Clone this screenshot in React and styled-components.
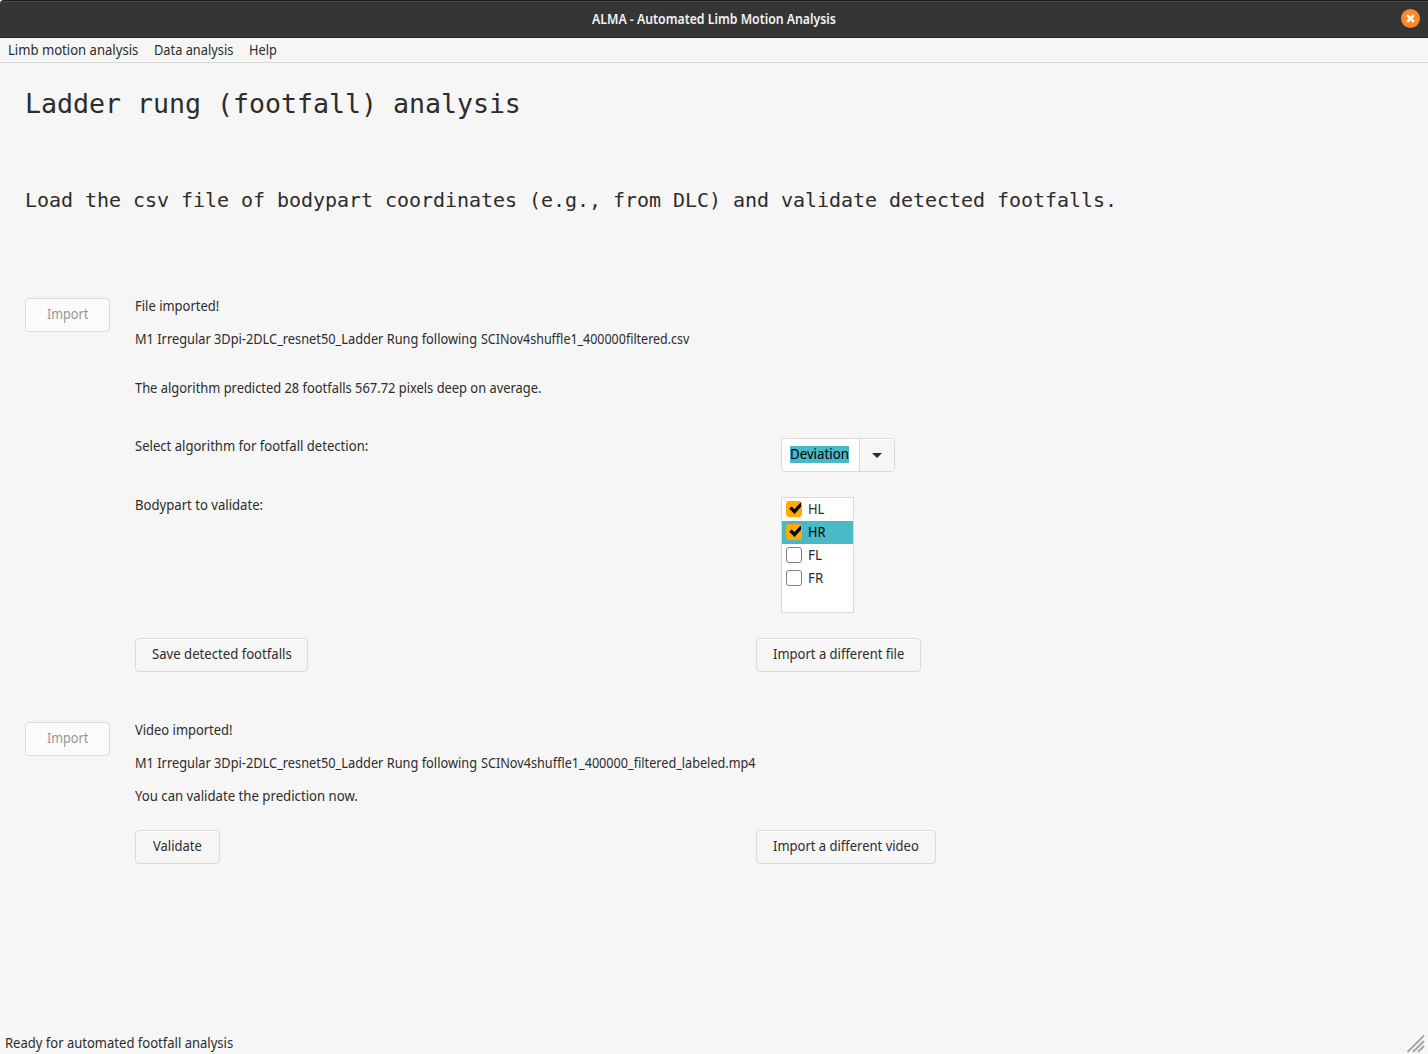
import React, { useLayoutEffect, useRef, useState } from "react";
import styled, { createGlobalStyle, css } from "styled-components";

const GlobalStyle = createGlobalStyle`
  * { box-sizing: border-box; }
  body {
    margin: 0;
    background: #f6f6f6;
    color: #2c2c2c;
    font: 14.6px/17px "Noto Sans", "Open Sans", sans-serif;
    overflow: hidden;
  }
`;

const Window = styled.div`
  display: flex;
  flex-direction: column;
  width: 1428px;
  height: 1054px;
  background: #f6f6f6;
`;

const TitleBar = styled.header`
  display: grid;
  grid-template-columns: 40px 1fr 40px;
  align-items: center;
  height: 38px;
  flex: none;
  background: #353535;
  border-top: 1px solid #1e1e1e;
  border-bottom: 1px solid #222222;
  border-radius: 4px 0 0 0;
  box-shadow: inset 0 1px 0 #484848;
`;

const WindowTitle = styled.div`
  grid-column: 2;
  display: flex;
  justify-content: center;
  color: #f2f2f2;
  font-weight: 600;
`;

const CloseButton = styled.button`
  display: flex;
  justify-content: center;
  align-items: center;
  justify-self: center;
  width: 19px;
  height: 19px;
  margin: 0 0 1px 5px;
  padding: 0;
  border: 0;
  border-radius: 50%;
  background: #f68b29;
`;

const MenuBar = styled.nav`
  display: flex;
  gap: 16px;
  height: 25px;
  flex: none;
  padding: 4px 8px 0;
  border-bottom: 1px solid #dadada;
`;

const Page = styled.main`
  flex: 1;
  padding: 25px 25px 0;
`;

const Heading = styled.h1`
  margin: 0;
  height: 96px;
  font: 26.6px/32px "DejaVu Sans Mono", monospace;
  letter-spacing: -0.015px;
  white-space: pre;
`;

const Intro = styled.p`
  margin: 0;
  height: 114px;
  font: 20px/32px "DejaVu Sans Mono", monospace;
  letter-spacing: -0.04px;
  white-space: pre;
`;

const Form = styled.div`
  display: grid;
  grid-template-columns: 110px 621px 1fr;
  grid-template-rows: 33px 49px 58px 59px 141px 84px 33px 33px 42px 34px;
  align-items: start;
  justify-items: start;
`;

const Cell = styled.div`
  display: flex;
  grid-column: ${(p) => p.$col};
  grid-row: ${(p) => p.$row};
  margin-left: ${(p) => p.$indent || 0}px;
`;

const Button = styled.button`
  display: flex;
  justify-content: center;
  align-items: flex-start;
  width: ${(p) => p.$width}px;
  height: 34px;
  padding: 7px 0 0;
  border: 1px solid #dadada;
  border-radius: 4px;
  background: #f6f6f6;
  box-shadow: inset 0 1px 0 #ffffff;
  color: #2c2c2c;
  font: inherit;
  ${(p) =>
    p.disabled &&
    css`
      background: #fbfbfb;
      color: #959595;
      box-shadow: none;
    `}
`;

const Combo = styled.div`
  display: flex;
  width: 114px;
  height: 34px;
  border: 1px solid #dadada;
  border-radius: 4px;
  background: #ffffff;
  overflow: hidden;
`;

const ComboValue = styled.div`
  width: 77px;
  padding: 7px 0 0 8px;
`;

const Selection = styled.div`
  width: 59px;
  height: 17px;
  background: #49b9c7;
  color: #000000;
`;

const ComboToggle = styled.div`
  flex: 1;
  display: flex;
  justify-content: center;
  align-items: center;
  border-left: 1px solid #dadada;
  background: #f6f6f6;
  box-shadow: inset 0 1px 0 #ffffff;
`;

const CheckList = styled.div`
  width: 73px;
  height: 116px;
  border: 1px solid #dadada;
  background: #ffffff;
`;

const CheckItem = styled.div`
  display: flex;
  align-items: flex-start;
  gap: 6px;
  height: 23px;
  padding: 3px 4px;
  background: ${(p) => (p.$selected ? "#49b9c7" : "transparent")};
  color: ${(p) => (p.$selected ? "#000000" : "#2c2c2c")};
`;

const CheckBox = styled.span`
  display: flex;
  flex: none;
  width: 16px;
  height: 16px;
  border: ${(p) => (p.$checked ? "0" : "1px solid #808080")};
  border-radius: 3px;
  background: ${(p) => (p.$checked ? "#ffab00" : "#ffffff")};
`;

const StatusBar = styled.footer`
  display: flex;
  justify-content: space-between;
  align-items: flex-start;
  height: 19px;
  flex: none;
  padding: 0 3px 0 5px;
`;

const LabelBox = styled.span`
  display: block;
  flex: none;
  width: ${(p) => p.$width}px;
  height: 17px;
  white-space: pre;
`;

const LabelText = styled.span`
  display: block;
  width: max-content;
  line-height: 15px;
  transform-origin: 0 50%;
`;

/* Condenses its text horizontally so that it fills the given width. */
function Label({ width, children }) {
  const ref = useRef(null);
  const [scale, setScale] = useState(1);
  useLayoutEffect(() => {
    setScale(width / ref.current.offsetWidth);
  }, [width, children]);
  return (
    <LabelBox $width={width}>
      <LabelText ref={ref} style={{ transform: `scaleX(${scale})` }}>
        {children}
      </LabelText>
    </LabelBox>
  );
}

const bodyparts = [
  { name: "HL", width: 16, checked: true },
  { name: "HR", width: 17.5, checked: true, selected: true },
  { name: "FL", width: 14 },
  { name: "FR", width: 15.5 },
];

export default function App() {
  return (
    <Window>
      <GlobalStyle />
      <TitleBar>
        <WindowTitle>
          <Label width={243.5}>ALMA - Automated Limb Motion Analysis</Label>
        </WindowTitle>
        <CloseButton aria-label="Close">
          <svg width="9" height="9" viewBox="0 0 9 9">
            <path d="M1.1 1.1 7.9 7.9M7.9 1.1 1.1 7.9" stroke="#fff" strokeWidth="2.4" />
          </svg>
        </CloseButton>
      </TitleBar>
      <MenuBar>
        <Label width={130}>Limb motion analysis</Label>
        <Label width={79}>Data analysis</Label>
        <Label width={28}>Help</Label>
      </MenuBar>
      <Page>
        <Heading>Ladder rung (footfall) analysis</Heading>
        <Intro>Load the csv file of bodypart coordinates (e.g., from DLC) and validate detected footfalls.</Intro>
        <Form>
          <Cell $col={1} $row={1}>
            <Button disabled $width={85}><Label width={41.5}>Import</Label></Button>
          </Cell>
          <Cell $col={2} $row={1}><Label width={84.5}>File imported!</Label></Cell>
          <Cell $col={2} $row={2}>
            <Label width={345.5}>{"M1 Irregular 3Dpi-2DLC_resnet50_Ladder Rung following "}</Label>
            <Label width={208.5}>SCINov4shuffle1_400000filtered.csv</Label>
          </Cell>
          <Cell $col={2} $row={3}>
            <Label width={406}>The algorithm predicted 28 footfalls 567.72 pixels deep on average.</Label>
          </Cell>
          <Cell $col={2} $row={4}><Label width={233}>Select algorithm for footfall detection:</Label></Cell>
          <Cell $col={3} $row={4} $indent={25}>
            <Combo>
              <ComboValue>
                <Selection><Label width={59}>Deviation</Label></Selection>
              </ComboValue>
              <ComboToggle>
                <svg width="10" height="5" viewBox="0 0 10 5">
                  <path d="M0 0H10L5 5Z" fill="#2c2c2c" />
                </svg>
              </ComboToggle>
            </Combo>
          </Cell>
          <Cell $col={2} $row={5}><Label width={128.5}>Bodypart to validate:</Label></Cell>
          <Cell $col={3} $row={5} $indent={25}>
            <CheckList>
              {bodyparts.map((b) => (
                <CheckItem key={b.name} $selected={b.selected}>
                  <CheckBox $checked={b.checked}>
                    {b.checked && (
                      <svg width="16" height="16" viewBox="0 0 16 16">
                        <path d="M3.2 7.7 5.6 5.4 8.5 8 14 2.2 15 1.8V5.8L8.6 12.9Z" fill="#000" />
                      </svg>
                    )}
                  </CheckBox>
                  <Label width={b.width}>{b.name}</Label>
                </CheckItem>
              ))}
            </CheckList>
          </Cell>
          <Cell $col={2} $row={6}>
            <Button $width={173}><Label width={139.5}>Save detected footfalls</Label></Button>
          </Cell>
          <Cell $col={3} $row={6}>
            <Button $width={165}><Label width={131}>Import a different file</Label></Button>
          </Cell>
          <Cell $col={1} $row={7}>
            <Button disabled $width={85}><Label width={41.5}>Import</Label></Button>
          </Cell>
          <Cell $col={2} $row={7}><Label width={97.5}>Video imported!</Label></Cell>
          <Cell $col={2} $row={8}>
            <Label width={345.5}>{"M1 Irregular 3Dpi-2DLC_resnet50_Ladder Rung following "}</Label>
            <Label width={275}>SCINov4shuffle1_400000_filtered_labeled.mp4</Label>
          </Cell>
          <Cell $col={2} $row={9}><Label width={223}>You can validate the prediction now.</Label></Cell>
          <Cell $col={2} $row={10}>
            <Button $width={85}><Label width={49}>Validate</Label></Button>
          </Cell>
          <Cell $col={3} $row={10}>
            <Button $width={180}><Label width={146}>Import a different video</Label></Button>
          </Cell>
        </Form>
      </Page>
      <StatusBar>
        <Label width={228.5}>Ready for automated footfall analysis</Label>
        <svg width="18" height="18" viewBox="0 0 18 18">
          <path d="M.5 17 17 .5M6 17 17 6M11 17 17 11" stroke="#a3a3a3" strokeWidth="1.8" />
        </svg>
      </StatusBar>
    </Window>
  );
}
